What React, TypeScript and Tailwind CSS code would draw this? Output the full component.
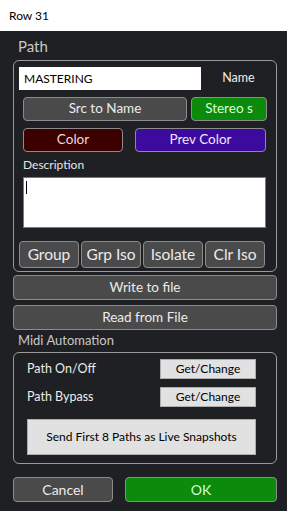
import React from "react";

const darkBtn =
  "flex items-center justify-center rounded-[4px] border border-[#8c8c8c] bg-[#4a4a4a] text-[#ececec] leading-none";
const winBtn =
  "flex items-center justify-center border border-[#adadad] bg-[#e1e1e1] text-[#000] text-[12px] leading-none";

export default function App() {
  return (
    <div
      className="w-[287px] h-[511px] bg-[#1f2023] flex flex-col overflow-hidden"
      style={{ fontFamily: 'Lato, "Noto Sans", sans-serif' }}
    >
      <div className="h-[31px] bg-white flex items-center pl-[9px] text-[12px] text-black">
        Row 31
      </div>
      <div className="pl-[13px] pr-[10px] flex flex-col">
        <div className="h-[29px] flex items-center pl-[5px] pt-[2px] text-[15px] text-[#c8c8c8]">
          Path
        </div>
        {/* Path group box */}
        <div className="rounded-[6px] border border-[#9a9a9a] flex flex-col pb-[3px]">
          <div className="mt-[6px] flex items-center h-[23px]">
            <div className="ml-[5px] w-[182px] h-[23px] bg-white flex items-center pl-[5px] text-[12px] text-black">
              MASTERING
            </div>
            <div className="flex-1 text-center text-[12.5px] text-[#ececec]">Name</div>
          </div>
          <div className="mt-[7px] flex h-[24px] pl-[9px] gap-[4px]">
            <div className={`${darkBtn} w-[164px] text-[13.5px]`}>Src to Name</div>
            <div className="w-[76px] flex items-center justify-center rounded-[4px] border border-[#8c8c8c] bg-[#0b8a0b] text-[#d8ffd8] text-[13.5px] leading-none">
              Stereo s
            </div>
          </div>
          <div className="mt-[7px] flex h-[24px] pl-[9px] gap-[12px]">
            <div className="w-[100px] flex items-center justify-center rounded-[4px] border border-[#8c8c8c] bg-[#3c0000] text-[#f0d8d8] text-[13.5px] leading-none">
              Color
            </div>
            <div className="w-[131px] flex items-center justify-center rounded-[4px] border border-[#8c8c8c] bg-[#3d0a9e] text-[#f0e6ff] text-[13.5px] leading-none">
              Prev Color
            </div>
          </div>
          <div className="mt-[5px] pl-[9px] h-[16px] flex items-center text-[12px] text-[#e6e6e6]">
            Description
          </div>
          <div className="mt-[4px] ml-[9px] w-[243px] h-[51px] bg-white border border-[#7a7a7a] relative">
            <div className="absolute left-[2px] top-[3px] w-[1px] h-[13px] bg-black" />
          </div>
          <div className="mt-[13px] flex h-[27px] pl-[5px] gap-[2px]">
            <div className={`${darkBtn} w-[60px] text-[15.5px]`}>Group</div>
            <div className={`${darkBtn} w-[60px] text-[15.5px]`}>Grp Iso</div>
            <div className={`${darkBtn} w-[60px] text-[15.5px]`}>Isolate</div>
            <div className={`${darkBtn} w-[60px] text-[15.5px]`}>Clr Iso</div>
          </div>
        </div>
        <div className={`${darkBtn} mt-[3px] h-[25px] text-[13.5px]`}>Write to file</div>
        <div className={`${darkBtn} mt-[5px] h-[25px] text-[13.5px]`}>Read from File</div>
        <div className="h-[22px] flex items-center pl-[5px] text-[13px] text-[#c8c8c8]">
          Midi Automation
        </div>
        {/* Midi group box */}
        <div className="rounded-[6px] border border-[#9a9a9a] flex flex-col pb-[8px]">
          <div className="mt-[6px] flex items-center h-[20px]">
            <div className="pl-[13px] w-[146px] text-[12.5px] text-[#ececec]">Path On/Off</div>
            <div className={`${winBtn} w-[96px] h-[20px]`}>Get/Change</div>
          </div>
          <div className="mt-[8px] flex items-center h-[20px]">
            <div className="pl-[13px] w-[146px] text-[12.5px] text-[#ececec]">Path Bypass</div>
            <div className={`${winBtn} w-[96px] h-[20px]`}>Get/Change</div>
          </div>
          <div className={`${winBtn} mt-[12px] ml-[13px] w-[229px] h-[36px]`}>
            Send First 8 Paths as Live Snapshots
          </div>
        </div>
        <div className="mt-[13px] flex h-[25px] justify-between">
          <div className={`${darkBtn} w-[100px] text-[14px]`}>Cancel</div>
          <div className="w-[152px] flex items-center justify-center rounded-[4px] border border-[#8c8c8c] bg-[#0b8a0b] text-[#d8ffd8] text-[14px] leading-none">
            OK
          </div>
        </div>
      </div>
    </div>
  );
}
